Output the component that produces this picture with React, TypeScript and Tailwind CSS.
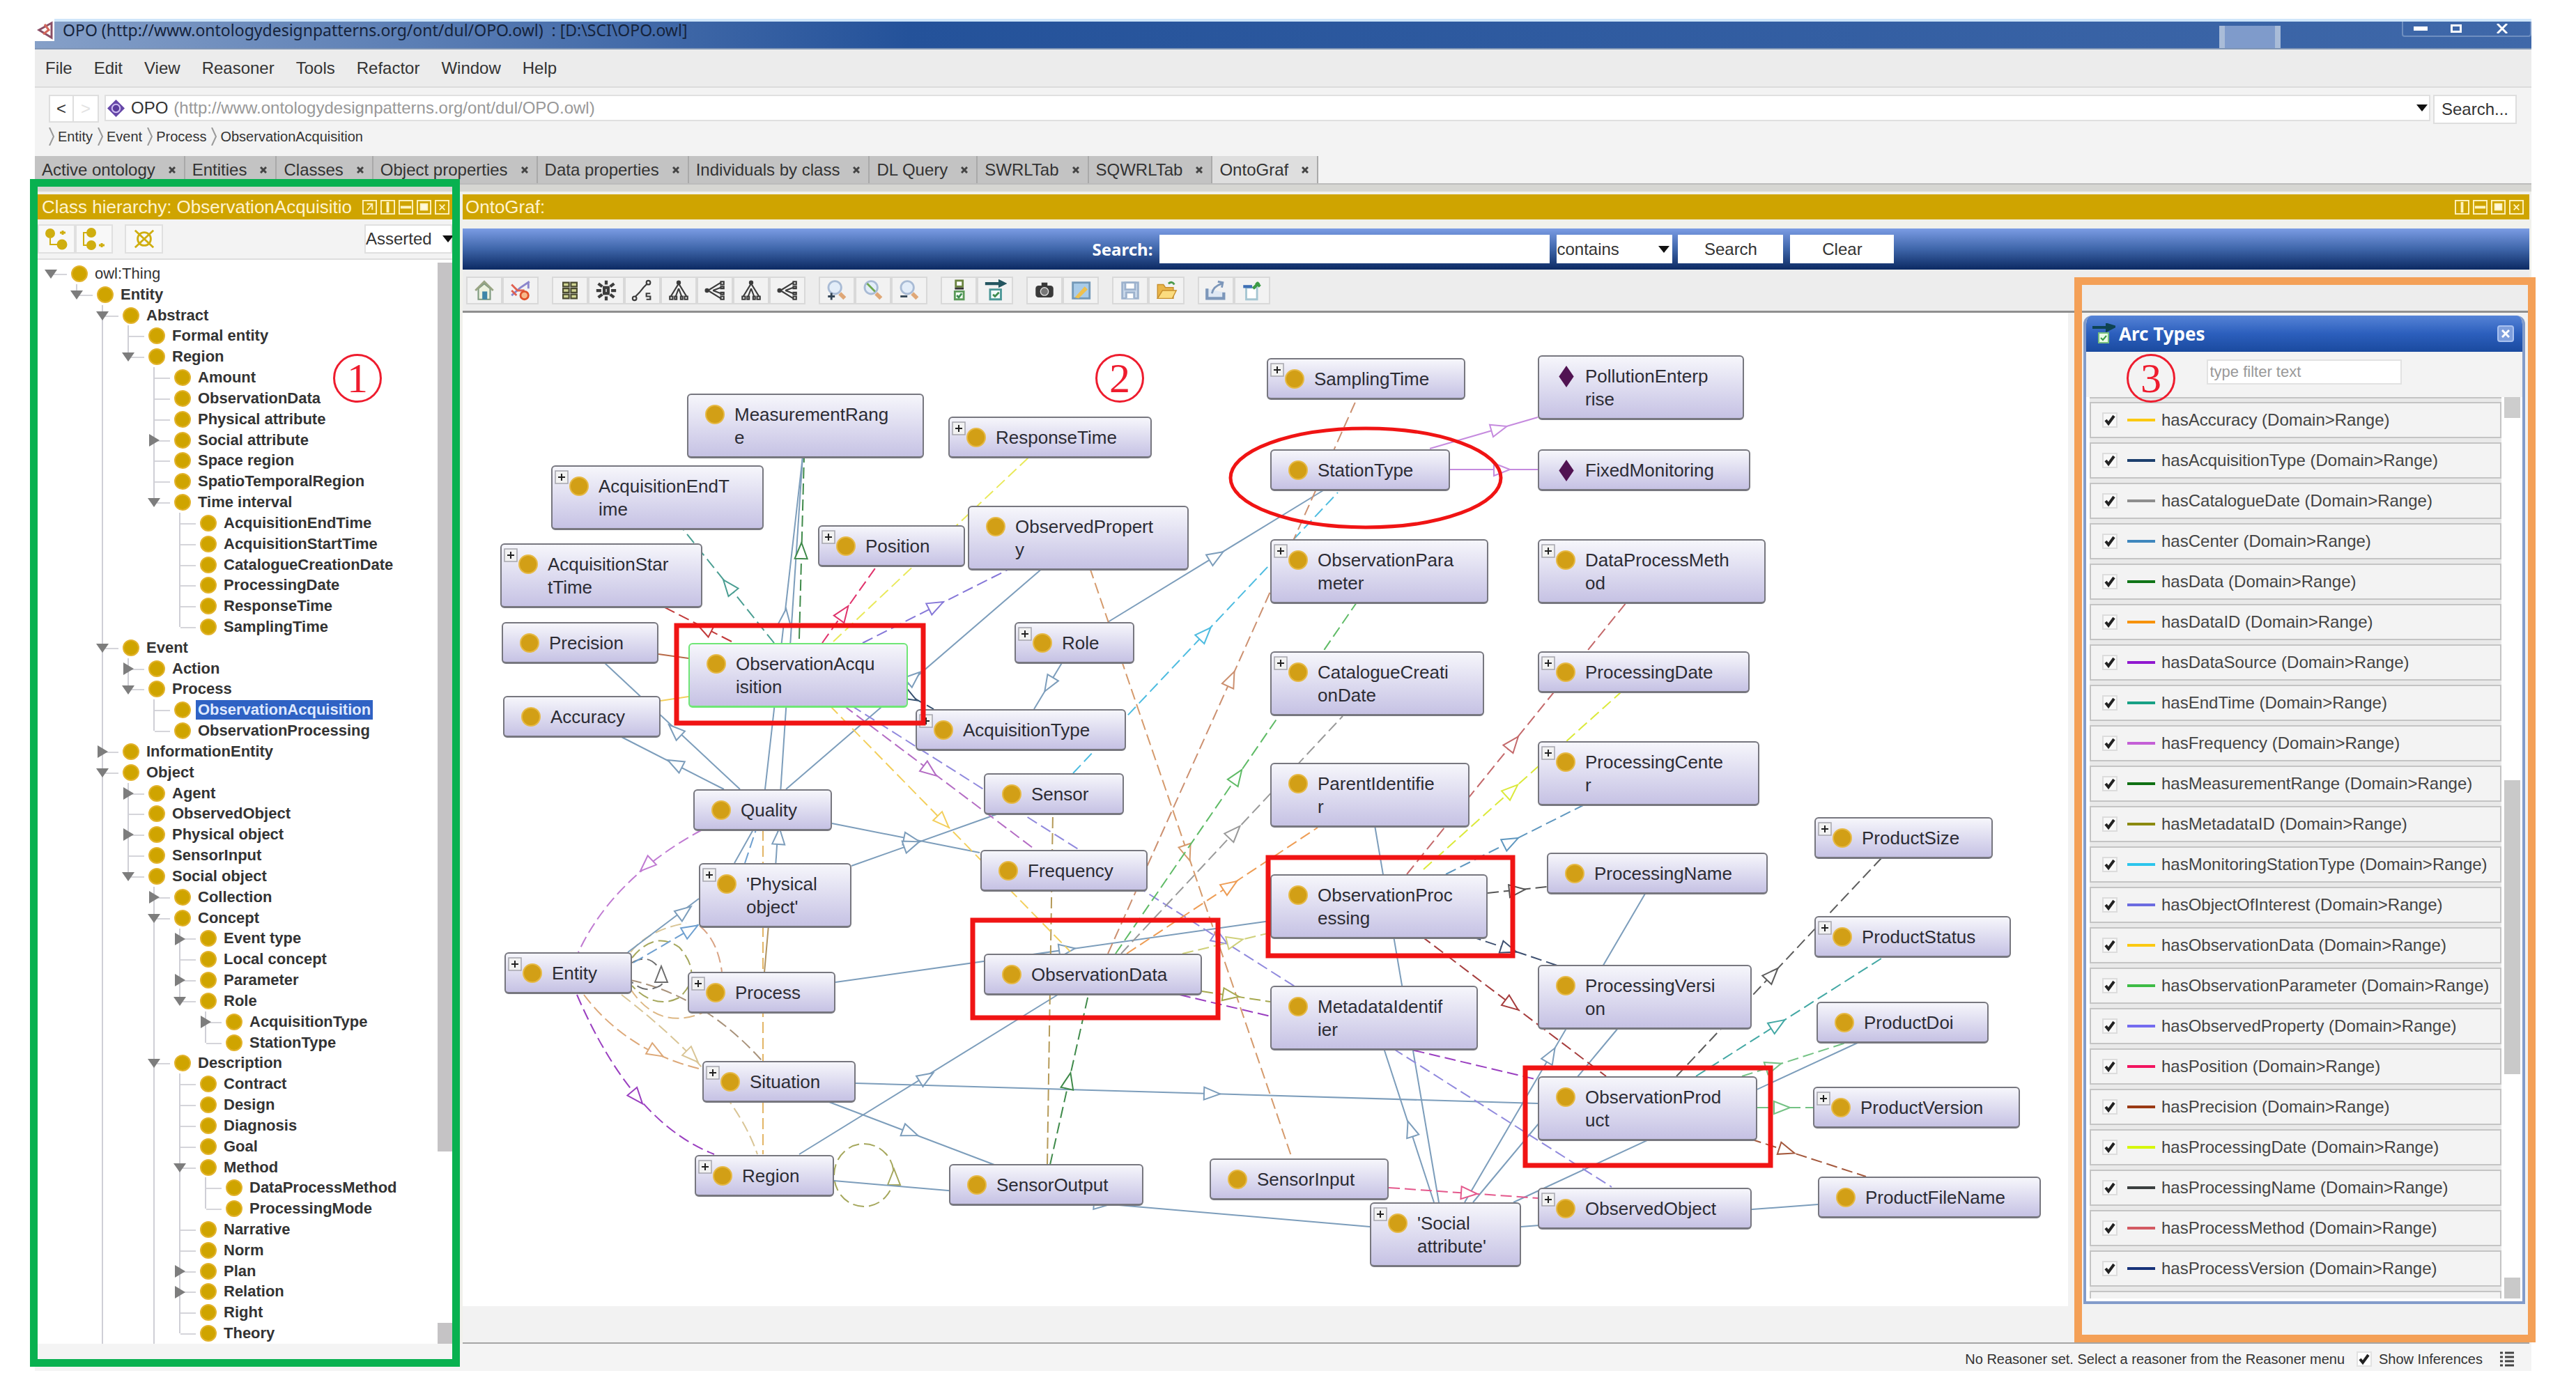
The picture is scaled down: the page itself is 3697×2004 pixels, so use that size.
import React, { useState } from 'react';

type TreeRow = { level: number; name: string; state?: 'open' | 'closed' };

const TREE: TreeRow[] = [
  { level: 0, name: 'owl:Thing', state: 'open' },
  { level: 1, name: 'Entity', state: 'open' },
  { level: 2, name: 'Abstract', state: 'open' },
  { level: 3, name: 'Formal entity' },
  { level: 3, name: 'Region', state: 'open' },
  { level: 4, name: 'Amount' },
  { level: 4, name: 'ObservationData' },
  { level: 4, name: 'Physical attribute' },
  { level: 4, name: 'Social attribute', state: 'closed' },
  { level: 4, name: 'Space region' },
  { level: 4, name: 'SpatioTemporalRegion' },
  { level: 4, name: 'Time interval', state: 'open' },
  { level: 5, name: 'AcquisitionEndTime' },
  { level: 5, name: 'AcquisitionStartTime' },
  { level: 5, name: 'CatalogueCreationDate' },
  { level: 5, name: 'ProcessingDate' },
  { level: 5, name: 'ResponseTime' },
  { level: 5, name: 'SamplingTime' },
  { level: 2, name: 'Event', state: 'open' },
  { level: 3, name: 'Action', state: 'closed' },
  { level: 3, name: 'Process', state: 'open' },
  { level: 4, name: 'ObservationAcquisition' },
  { level: 4, name: 'ObservationProcessing' },
  { level: 2, name: 'InformationEntity', state: 'closed' },
  { level: 2, name: 'Object', state: 'open' },
  { level: 3, name: 'Agent', state: 'closed' },
  { level: 3, name: 'ObservedObject' },
  { level: 3, name: 'Physical object', state: 'closed' },
  { level: 3, name: 'SensorInput' },
  { level: 3, name: 'Social object', state: 'open' },
  { level: 4, name: 'Collection', state: 'closed' },
  { level: 4, name: 'Concept', state: 'open' },
  { level: 5, name: 'Event type', state: 'closed' },
  { level: 5, name: 'Local concept' },
  { level: 5, name: 'Parameter', state: 'closed' },
  { level: 5, name: 'Role', state: 'open' },
  { level: 6, name: 'AcquisitionType', state: 'closed' },
  { level: 6, name: 'StationType' },
  { level: 4, name: 'Description', state: 'open' },
  { level: 5, name: 'Contract' },
  { level: 5, name: 'Design' },
  { level: 5, name: 'Diagnosis' },
  { level: 5, name: 'Goal' },
  { level: 5, name: 'Method', state: 'open' },
  { level: 6, name: 'DataProcessMethod' },
  { level: 6, name: 'ProcessingMode' },
  { level: 5, name: 'Narrative' },
  { level: 5, name: 'Norm' },
  { level: 5, name: 'Plan', state: 'closed' },
  { level: 5, name: 'Relation', state: 'closed' },
  { level: 5, name: 'Right' },
  { level: 5, name: 'Theory' },
];

// levels of the rows that follow below the visible part of the tree
const BELOW = [4, 2];
const LEVELS = [...TREE.map(r => r.level), ...BELOW];

const hasNext = (index: number, level: number) => {
  for (let j = index + 1; j < LEVELS.length; j++) {
    if (LEVELS[j] < level) return false;
    if (LEVELS[j] === level) return true;
  }
  return false;
};

type GraphNode = {
  x: number; y: number; w: number; lines: string[];
  plus?: boolean; individual?: boolean; selected?: boolean;
};

const NODES: GraphNode[] = [
  { x: 986, y: 565, w: 340, lines: ['MeasurementRang', 'e'] },
  { x: 1361, y: 598, w: 292, lines: ['ResponseTime'], plus: true },
  { x: 791, y: 668, w: 305, lines: ['AcquisitionEndT', 'ime'], plus: true },
  { x: 718, y: 780, w: 290, lines: ['AcquisitionStar', 'tTime'], plus: true },
  { x: 1174, y: 754, w: 211, lines: ['Position'], plus: true },
  { x: 1389, y: 726, w: 317, lines: ['ObservedPropert', 'y'] },
  { x: 1818, y: 514, w: 285, lines: ['SamplingTime'], plus: true },
  { x: 2207, y: 510, w: 296, lines: ['PollutionEnterp', 'rise'], individual: true },
  { x: 1823, y: 645, w: 258, lines: ['StationType'] },
  { x: 2207, y: 645, w: 305, lines: ['FixedMonitoring'], individual: true },
  { x: 1823, y: 774, w: 313, lines: ['ObservationPara', 'meter'], plus: true },
  { x: 2207, y: 774, w: 327, lines: ['DataProcessMeth', 'od'], plus: true },
  { x: 720, y: 893, w: 225, lines: ['Precision'] },
  { x: 722, y: 999, w: 226, lines: ['Accuracy'] },
  { x: 988, y: 923, w: 315, lines: ['ObservationAcqu', 'isition'], selected: true },
  { x: 1456, y: 893, w: 172, lines: ['Role'], plus: true },
  { x: 1314, y: 1018, w: 302, lines: ['AcquisitionType'], plus: true },
  { x: 1412, y: 1110, w: 201, lines: ['Sensor'] },
  { x: 995, y: 1133, w: 199, lines: ['Quality'] },
  { x: 1407, y: 1220, w: 240, lines: ['Frequency'] },
  { x: 1003, y: 1239, w: 219, lines: ["'Physical", "object'"], plus: true },
  { x: 724, y: 1367, w: 183, lines: ['Entity'], plus: true },
  { x: 987, y: 1395, w: 212, lines: ['Process'], plus: true },
  { x: 1412, y: 1369, w: 313, lines: ['ObservationData'] },
  { x: 1008, y: 1523, w: 220, lines: ['Situation'], plus: true },
  { x: 997, y: 1658, w: 200, lines: ['Region'], plus: true },
  { x: 1362, y: 1671, w: 279, lines: ['SensorOutput'] },
  { x: 1736, y: 1663, w: 257, lines: ['SensorInput'] },
  { x: 1823, y: 935, w: 307, lines: ['CatalogueCreati', 'onDate'], plus: true },
  { x: 2207, y: 935, w: 304, lines: ['ProcessingDate'], plus: true },
  { x: 1823, y: 1095, w: 286, lines: ['ParentIdentifie', 'r'] },
  { x: 2207, y: 1064, w: 318, lines: ['ProcessingCente', 'r'], plus: true },
  { x: 1823, y: 1255, w: 312, lines: ['ObservationProc', 'essing'] },
  { x: 2220, y: 1224, w: 317, lines: ['ProcessingName'] },
  { x: 2604, y: 1173, w: 256, lines: ['ProductSize'], plus: true },
  { x: 2604, y: 1315, w: 282, lines: ['ProductStatus'], plus: true },
  { x: 2607, y: 1438, w: 247, lines: ['ProductDoi'] },
  { x: 2602, y: 1560, w: 297, lines: ['ProductVersion'], plus: true },
  { x: 2609, y: 1689, w: 320, lines: ['ProductFileName'] },
  { x: 2207, y: 1385, w: 307, lines: ['ProcessingVersi', 'on'] },
  { x: 2207, y: 1545, w: 315, lines: ['ObservationProd', 'uct'] },
  { x: 1823, y: 1415, w: 298, lines: ['MetadataIdentif', 'ier'] },
  { x: 1966, y: 1726, w: 217, lines: ["'Social", "attribute'"], plus: true },
  { x: 2207, y: 1705, w: 307, lines: ['ObservedObject'], plus: true },
];

type Edge = { p: [number, number, number, number]; at?: [number, number]; c: string; dash?: boolean };

const SUB = '#7c9dbb';

const EDGES: Edge[] = [
  // has subclass
  { p: [1098, 1133, 1152, 655], at: [1127, 885], c: SUB },
  { p: [1112, 1260, 1152, 655], at: [1118, 1200], c: SUB },
  { p: [1128, 1133, 1497, 815], at: [1312, 972], c: SUB },
  { p: [1062, 1133, 867, 951], at: [968, 1048], c: SUB },
  { p: [1039, 1133, 892, 1058], at: [968, 1096], c: SUB },
  { p: [1194, 1182, 1406, 1224], at: [1309, 1206], c: SUB },
  { p: [1222, 1243, 1433, 1168], at: [1309, 1212], c: SUB },
  { p: [901, 1367, 1003, 1290], at: [983, 1308], c: SUB },
  { p: [1054, 1239, 1081, 1191], c: SUB },
  { p: [1199, 1410, 1823, 1322], at: [1532, 1363], c: SUB },
  { p: [1147, 1657, 1518, 1428], at: [1330, 1546], c: SUB },
  { p: [1190, 1582, 1427, 1672], at: [1307, 1626], c: SUB },
  { p: [1228, 1555, 2207, 1584], at: [1740, 1570], c: SUB },
  { p: [1197, 1695, 1966, 1761], at: [1582, 1728], c: SUB },
  { p: [1525, 950, 1484, 1018], at: [1505, 983], c: SUB },
  { p: [1590, 893, 1899, 704], at: [1746, 798], c: SUB },
  { p: [2065, 1726, 1973, 1185], c: SUB },
  { p: [2058, 1726, 1986, 1505], at: [2024, 1620], c: SUB },
  { p: [2102, 1726, 2361, 1283], at: [2226, 1514], c: SUB },
  { p: [2114, 1726, 2323, 1475], c: SUB },
  { p: [2172, 1726, 2666, 1497], c: SUB },
  { p: [2183, 1761, 2609, 1729], c: SUB },
  // object properties
  { p: [909, 1382, 1003, 1327], at: [992, 1334], c: '#6fa0d0', dash: true },
  { p: [1069, 1239, 1085, 1191], c: '#6fa0d0', dash: true },
  { p: [1147, 917, 1154, 656], at: [1150, 790], c: '#3f8a4a', dash: true },
  { p: [1095, 1191, 1095, 1657], c: '#e3b565', dash: true },
  { p: [1103, 1328, 1097, 1396], c: '#b0925f' },
  { p: [1507, 1672, 1562, 1428], at: [1534, 1551], c: '#3f8a4a', dash: true },
  { p: [1503, 1672, 1511, 1168], c: '#b59a58', dash: true },
  { p: [1191, 1013, 1536, 1366], at: [1354, 1180], c: '#f3cf5c', dash: true },
  { p: [1211, 1013, 1486, 1220], at: [1335, 1107], c: '#b46cc4', dash: true },
  { p: [1222, 1013, 2313, 1704], at: [1752, 1349], c: '#9089dd', dash: true },
  { p: [1050, 921, 946, 868], at: [1010, 901], c: '#c23a3a', dash: true },
  { p: [1111, 923, 979, 758], at: [1045, 841], c: '#4a9e92', dash: true },
  { p: [1180, 923, 1258, 813], at: [1211, 879], c: '#e0336c', dash: true },
  { p: [1196, 921, 1476, 657], c: '#e9e95a', dash: true },
  { p: [1238, 923, 1452, 815], at: [1344, 869], c: '#8577d8', dash: true },
  { p: [988, 945, 945, 939], c: '#b86a48' },
  { p: [988, 1000, 948, 1006], c: '#f3cf5c' },
  { p: [1290, 990, 1340, 1018], at: [1306, 1000], c: '#36506f', dash: true },
  { p: [1540, 1110, 1920, 707], at: [1730, 909], c: '#4ebce0', dash: true },
  { p: [1564, 815, 1854, 1662], at: [1704, 1225], c: '#d59a6c', dash: true },
  { p: [1590, 1369, 1947, 573], at: [1767, 974], c: '#cc9070', dash: true },
  { p: [1601, 1369, 1947, 865], at: [1776, 1114], c: '#5fbb66', dash: true },
  { p: [1609, 1369, 1927, 1028], at: [1772, 1194], c: '#9a9a9a', dash: true },
  { p: [1617, 1369, 1891, 1188], at: [1766, 1271], c: '#ee9d55', dash: true },
  { p: [1697, 1369, 1823, 1339], at: [1773, 1351], c: '#cfd07a', dash: true },
  { p: [1725, 1423, 1823, 1438], at: [1767, 1429], c: '#a6a84e', dash: true },
  { p: [1693, 1428, 2207, 1550], c: '#9a3fc0', dash: true },
  { p: [1993, 1705, 2222, 1721], at: [2109, 1713], c: '#e4588c', dash: true },
  { p: [2019, 1255, 2334, 865], at: [2172, 1066], c: '#c4696b', dash: true },
  { p: [2043, 1248, 2326, 994], at: [2170, 1134], c: '#dbe93a', dash: true },
  { p: [2075, 1255, 2274, 1155], at: [2169, 1208], c: '#5f97bf', dash: true },
  { p: [2135, 1282, 2220, 1273], at: [2178, 1278], c: '#555555', dash: true },
  { p: [2110, 1344, 2235, 1386], at: [2166, 1363], c: '#3d4f70', dash: true },
  { p: [2040, 1344, 2305, 1545], at: [2170, 1443], c: '#a63d3d', dash: true },
  { p: [2406, 1545, 2700, 1232], at: [2544, 1398], c: '#5c5c5c', dash: true },
  { p: [2434, 1545, 2703, 1374], at: [2552, 1470], c: '#43a8a4', dash: true },
  { p: [2500, 1545, 2649, 1497], at: [2546, 1530], c: '#74c284', dash: true },
  { p: [2522, 1590, 2602, 1590], at: [2558, 1590], c: '#74c284', dash: true },
  { p: [2512, 1635, 2678, 1689], at: [2565, 1652], c: '#a4583c', dash: true },
  // has individual
  { p: [2052, 644, 2207, 599], at: [2152, 615], c: '#c58ade' },
  { p: [2081, 674, 2207, 674], at: [2156, 674], c: '#c58ade' },
];

type Curve = { d: string; c: string; at?: [number, number, number] };

const CURVES: Curve[] = [
  { d: 'M1008 1191Q880 1260 830 1367', c: '#c07ad2', at: [927, 1243, 137] },
  { d: 'M828 1428Q907 1611 1025 1657', c: '#9a3fc0', at: [915, 1576, 50] },
  { d: 'M838 1428Q900 1510 1007 1535', c: '#dda878', at: [942, 1511, 30] },
  { d: 'M892 1428Q1050 1550 1087 1657', c: '#d9c596', at: [994, 1517, 45] },
  { d: 'M905 1407Q1010 1430 1093 1522', c: '#a8927a' },
  { d: 'M907 1382Q930 1368 946 1390T940 1418Q925 1425 907 1410', c: '#6c6c6c', at: [949, 1398, -90] },
  { d: 'M907 1375Q940 1335 975 1360Q1010 1400 975 1432Q940 1450 907 1415', c: '#a5a75c' },
  { d: 'M1004 1329Q1030 1350 1036 1395', c: '#d9a384' },
  { d: 'M905 1420Q945 1480 1008 1454', c: '#ddb784' },
  { d: 'M905 1367Q930 1335 985 1325', c: '#d9c596' },
  { d: 'M1197 1687A43 45 0 0 1 1283 1687A43 45 0 0 1 1197 1687', c: '#a5a75c', at: [1283, 1689, -90] },
];

const ARCS: [string, string][] = [
  ['hasAccuracy', '#fbc911'], ['hasAcquisitionType', '#1c3f6e'], ['hasCatalogueDate', '#8d8d8d'],
  ['hasCenter', '#3f87bd'], ['hasData', '#107518'], ['hasDataID', '#f79208'],
  ['hasDataSource', '#9018cf'], ['hasEndTime', '#17a085'], ['hasFrequency', '#c45fd6'],
  ['hasMeasurementRange', '#0f7013'], ['hasMetadataID', '#8b8a10'], ['hasMonitoringStationType', '#2cc5ec'],
  ['hasObjectOfInterest', '#6b6be0'], ['hasObservationData', '#fbc911'], ['hasObservationParameter', '#3dbb45'],
  ['hasObservedProperty', '#746bef'], ['hasPosition', '#f2145f'], ['hasPrecision', '#9a3a14'],
  ['hasProcessingDate', '#d6f70b'], ['hasProcessingName', '#3b3f3f'], ['hasProcessMethod', '#d35a62'],
  ['hasProcessVersion', '#173279'],
];

const TABS = ['Active ontology', 'Entities', 'Classes', 'Object properties', 'Data properties', 'Individuals by class', 'DL Query', 'SWRLTab', 'SQWRLTab', 'OntoGraf'];

// graph coordinate shown in the top left corner of the canvas
const ORIGIN = { x: 664, y: 449 };

function Caret({ className = '' }: { className?: string }) {
  return <svg viewBox="0 0 16 10" className={`h-[10px] w-4 ${className}`}><path d="M0 0H16L8 10Z" fill="#111" /></svg>;
}

function Marker({ n, className }: { n: number; className: string }) {
  return (
    <div className={`absolute z-30 flex size-[70px] items-center justify-center rounded-full border-[3px] border-[#ee1c2e] font-['Liberation_Serif',serif] text-[60px] leading-none text-[#ee1c2e] ${className}`}>
      {n}
    </div>
  );
}

function ViewButtons({ names }: { names: string[] }) {
  const shapes: Record<string, React.ReactNode> = {
    Float: <path d="M7 6h8v9M15 6L7 16" />,
    'Split vertically': <path d="M11 3V19" strokeWidth="4" />,
    'Split horizontally': <path d="M3 11H19" strokeWidth="4" />,
    Maximise: <rect x="6" y="6" width="10" height="9" fill="#fff8dc" />,
    Close: <path d="M7 7L15 15M15 7L7 15" />,
  };
  return (
    <div className="flex gap-[5px]">
      {names.map(name => (
        <button key={name} aria-label={name} className="size-[21px]">
          <svg viewBox="0 0 22 22" className="size-full" fill="none" stroke="#fff3bf" strokeWidth="2">
            <rect x="1" y="1" width="20" height="20" />
            {shapes[name]}
          </svg>
        </button>
      ))}
    </div>
  );
}

function TreeItem({ row, index }: { row: TreeRow; index: number }) {
  const selected = row.name === 'ObservationAcquisition';
  const next = hasNext(index, row.level);
  return (
    <li className="flex min-h-0 flex-1 items-center">
      {Array.from({ length: row.level }, (_, level) => (
        <span key={level} className="flex h-full w-[37px] shrink-0">
          {level > 0 && hasNext(index, level) && <span className="w-[19px] border-r-2 border-[#cfcfd6]" />}
        </span>
      ))}
      <span className="relative h-full w-[37px] shrink-0">
        {row.level > 0 && <span className={`absolute left-0 top-0 w-[19px] border-r-2 border-[#cfcfd6] ${next ? 'h-full' : 'h-1/2'}`} />}
        <span className="absolute left-[19px] top-1/2 w-[22px] border-t-2 border-[#d5d5da]" />
        {row.state && (
          <svg viewBox="0 0 18 18" className="absolute left-[9px] top-[6px] size-[18px]">
            <path d={row.state === 'open' ? 'M0 3H18L9 16Z' : 'M2 0L17 9L2 18Z'} fill="#7d7d7d" />
          </svg>
        )}
      </span>
      <span className="ml-[10px] size-6 shrink-0 rounded-full border-2 border-[#e2b32c] bg-[#cfa400]" />
      <span className={`ml-[7px] whitespace-nowrap px-[3px] text-[22px] leading-7 ${selected ? 'bg-[#2f62c4] font-bold text-[#dfe9ff]' : row.level === 0 ? 'text-[#333]' : 'font-bold text-[#333]'}`}>
        {row.name}
      </span>
    </li>
  );
}

function ClassHierarchy() {
  return (
    <aside className="relative flex w-[612px] shrink-0 flex-col pl-1 pr-[13px]">
      <header className="flex h-9 shrink-0 items-center justify-between bg-[#cfa400] pl-[6px] pr-1">
        <h2 className="whitespace-nowrap text-[26px] leading-9 text-[#fff3cf]">Class hierarchy: ObservationAcquisitio</h2>
        <ViewButtons names={['Float', 'Split vertically', 'Split horizontally', 'Maximise', 'Close']} />
      </header>
      <div className="flex h-[58px] shrink-0 items-center border-b-2 border-[#dedede] bg-[#f3f3f3]">
        <button aria-label="Add subclass" className="flex h-[42px] w-[54px] items-center justify-center border-2 border-[#e0e0e0] bg-[#f8f8f8]">
          <svg viewBox="0 0 36 34" className="h-[34px] w-9" fill="#cfae10">
            <circle cx="9" cy="9" r="7" /><circle cx="26" cy="25" r="7.500" />
            <path d="M9 16V25H19" fill="none" stroke="#cfae10" strokeWidth="2" /><path d="M23 8h8M27 5v6" stroke="#cfae10" strokeWidth="3" />
          </svg>
        </button>
        <button aria-label="Add sibling class" className="flex h-[42px] w-[54px] items-center justify-center border-2 border-[#e0e0e0] bg-[#f8f8f8]">
          <svg viewBox="0 0 36 34" className="h-[34px] w-9" fill="#cfae10">
            <circle cx="14" cy="8" r="7" /><circle cx="14" cy="26" r="7" />
            <path d="M10 8H3V26H10" fill="none" stroke="#cfae10" strokeWidth="2" /><path d="M25 26h8M29 23v6" stroke="#cfae10" strokeWidth="3" />
          </svg>
        </button>
        <button aria-label="Delete class" className="ml-[17px] flex h-[42px] w-[55px] items-center justify-center border-2 border-[#e0e0e0] bg-[#f8f8f8]">
          <svg viewBox="0 0 34 34" className="size-8" fill="none" stroke="#cfae10" strokeWidth="3">
            <circle cx="17" cy="17" r="10" /><path d="M3 4L31 30M31 4L3 30" />
          </svg>
        </button>
        <div className="relative ml-auto h-[42px] w-[126px] border-2 border-[#e0e0e0] bg-white">
          <select aria-label="Hierarchy view" className="h-full w-full appearance-none text-2xl text-[#333]">
            <option>Asserted</option>
          </select>
          <Caret className="pointer-events-none absolute -right-1 top-[14px]" />
        </div>
      </div>
      <div className="flex min-h-0 flex-1 bg-white">
        <ul className="flex min-w-0 flex-1 flex-col pl-px pt-[5px]">
          {TREE.map((row, i) => <TreeItem key={i} row={row} index={i} />)}
        </ul>
        <div className="flex w-[21px] flex-col justify-between">
          <div className="mt-1 h-[82%] bg-[#c5c3c5]" />
          <div className="h-[30px] bg-[#c5c3c5]" />
        </div>
      </div>
      <Marker n={1} className="left-[428px] top-[229px]" />
      <div className="pointer-events-none absolute -bottom-[33px] -left-[7px] -top-[22px] right-[2px] z-20 border-[11px] border-[#09b150]" />
    </aside>
  );
}

const dark = { fill: 'none', stroke: '#3c3c3c', strokeWidth: 2 };
const treeDown = (
  <g fill="none" stroke="#3c3c3c" strokeWidth="1.500">
    <path d="M12 5L4 18M12 5L20 18M12 10L9 18M12 10L15 18" />
    <circle cx="12" cy="4" r="1.500" fill="#3c3c3c" />
    <path d="M3 18h3v3H3zM8 18h2v3H8zM14 18h2v3h-2zM18 18h3v3h-3z" />
  </g>
);
const treeRight = <g transform="rotate(-90 12 12)">{treeDown}</g>;
const lens = (sign: React.ReactNode) => (
  <g fill="none" strokeWidth="2">
    <path d="M15 15L20 20" stroke="#dfa777" strokeWidth="4" />
    <circle cx="10" cy="9" r="6.500" fill="#e3edf9" stroke="#a9bbd5" />
    {sign}
  </g>
);

const TOOLS: { name: string; icon: React.ReactNode }[][] = [
  [
    { name: 'Home', icon: <g strokeWidth="1.500"><path d="M6 10V21H18V10L12 5Z" fill="#edf2df" stroke="#7f9a80" /><path d="M3 12L12 3L21 12" fill="none" stroke="#9aa684" strokeWidth="2" /><rect x="10" y="13" width="5" height="8" fill="#3e86a8" /></g> },
    { name: 'Clear graph', icon: <g fill="none" strokeWidth="2"><path d="M3 17L12 9L21 3M20 3v7" stroke="#8b86cc" /><path d="M3 6L9 12L16 12M3 12L8 17" stroke="#e0604f" /><circle cx="16" cy="17" r="4" fill="#f7b98b" stroke="#e0522a" /></g> },
  ],
  [
    { name: 'Grid layout', icon: <path d="M5 4h6v4H5zM13 4h6v4h-6zM5 10h6v4H5zM13 10h6v4h-6zM5 16h6v4H5zM13 16h6v4h-6z" fill="#d0d592" stroke="#4a4a30" strokeWidth="1.500" /> },
    { name: 'Radial layout', icon: <g {...dark} strokeWidth="3"><path d="M12 2v4M12 18v4M2 12h5M17 12h5M4 5l4 3M20 5l-4 3M4 19l4-3M20 19l-4-3" /><rect x="10" y="9" width="4" height="6" /></g> },
    { name: 'Spring layout', icon: <g {...dark} strokeWidth="1.500"><path d="M5 18L9 14L13 9L17 5" /><circle cx="18" cy="4" r="2" /><circle cx="4" cy="20" r="2" /><path d="M20 15h-4v3h4v3h-4" /></g> },
    { name: 'Tree layout, vertical', icon: treeDown },
    { name: 'Tree layout, horizontal', icon: treeRight },
    { name: 'Directed layout, vertical', icon: treeDown },
    { name: 'Directed layout, horizontal', icon: treeRight },
  ],
  [
    { name: 'Zoom in', icon: lens(<path d="M3 18h7M6.500 14.500v7" stroke="#345" />) },
    { name: 'No zoom', icon: lens(<path d="M6 5L14 13" stroke="#6fa84f" />) },
    { name: 'Zoom out', icon: lens(<path d="M3 18h7" stroke="#345" />) },
  ],
  [
    { name: 'Node types', icon: <g fill="none" strokeWidth="2"><rect x="9" y="2" width="7" height="6" stroke="#6b8440" fill="#fff" /><path d="M8 10h9" stroke="#333" /><path d="M8 13h9v8H8z" stroke="#5c9a5a" fill="#f4fff4" /><path d="M10 17l2 2 3-4" stroke="#3e8c50" /></g> },
    { name: 'Arc types', icon: <g fill="none" strokeWidth="2"><path d="M2 5H18M17 3l4 2-4 2z" stroke="#245560" fill="#245560" strokeWidth="3" /><path d="M7 11h11v10H7z" stroke="#4b9797" fill="#f2fbfb" /><path d="M10 16l2 2 4-4" stroke="#3e8c50" /></g> },
  ],
  [
    { name: 'Screenshot', icon: <g><rect x="3" y="7" width="18" height="12" rx="3" fill="#3a3a3a" /><rect x="9" y="4" width="6" height="4" fill="#3a3a3a" /><circle cx="12" cy="13" r="4" fill="#777" stroke="#ddd" /></g> },
    { name: 'Export image', icon: <g><rect x="4" y="4" width="17" height="16" fill="#a9cbe8" stroke="#7398b8" strokeWidth="2" /><path d="M6 19L16 8L19 11L10 20Z" fill="#eec04e" /></g> },
  ],
  [
    { name: 'Save graph', icon: <g fill="none" stroke="#9db2cd" strokeWidth="2"><path d="M4 4h16v16H4z" fill="#c9d8ea" /><path d="M7 4h10v7H7zM8 20v-6h8v6" fill="#fff" /></g> },
    { name: 'Open graph', icon: <g><path d="M3 20V6h6l2 3h8v11z" fill="#e9b54a" stroke="#c78f2c" /><path d="M3 20L8 12h14l-4 8z" fill="#fbdc7f" stroke="#c78f2c" /><path d="M14 5q4-3 6 1" fill="none" stroke="#4c9a4c" strokeWidth="2" /></g> },
  ],
  [
    { name: 'Export graph', icon: <g fill="none" stroke="#7d97ba" strokeWidth="2"><path d="M3 10V20H20V14" fill="#dfe8f4" strokeWidth="3" /><path d="M8 15Q9 8 18 5M14 3l5 1-1 5" /></g> },
    { name: 'Pin tooltips', icon: <g fill="none" strokeWidth="2"><path d="M6 9h11v12H6z" stroke="#a5c6d2" fill="#fff" /><path d="M3 8h9" stroke="#3d6fb5" strokeWidth="3" /><path d="M13 10L19 4M16 4l4 4" stroke="#3c9a45" strokeWidth="3" /></g> },
  ],
];

function GraphEdges() {
  return (
    <svg width="2304" height="1425" viewBox="664 449 2304 1425" className="absolute left-0 top-0 max-w-none" fill="none" strokeWidth="2">
      {CURVES.map((c, i) => (
        <g key={i} stroke={c.c}>
          <path d={c.d} strokeDasharray="16 7" />
          {c.at && <path d="M-12 -9L11 0L-12 9Z" fill="#fff" transform={`translate(${c.at[0]} ${c.at[1]}) rotate(${c.at[2]})`} />}
        </g>
      ))}
      {EDGES.map(({ p, at, c, dash }, i) => {
        const angle = (Math.atan2(p[3] - p[1], p[2] - p[0]) * 180) / Math.PI;
        return (
          <g key={i} stroke={c}>
            <path d={`M${p[0]} ${p[1]}L${p[2]} ${p[3]}`} strokeDasharray={dash ? '16 7' : undefined} />
            {at && <path d="M-12 -9L11 0L-12 9Z" fill="#fff" transform={`translate(${at[0]} ${at[1]}) rotate(${angle})`} />}
          </g>
        );
      })}
    </svg>
  );
}

function GraphNodeBox({ node }: { node: GraphNode }) {
  return (
    <div
      className={`absolute flex items-start rounded-md border-2 border-b-[3px] bg-linear-to-b from-[#f6f6fb] to-[#c6c2e4] pb-[10px] pl-6 pt-3 ${node.selected ? 'border-[#6fe676]' : 'border-[#77777f]'}`}
      style={{ left: node.x - ORIGIN.x, top: node.y - ORIGIN.y, width: node.w }}
    >
      {node.plus && (
        <svg viewBox="0 0 20 20" className="absolute left-[3px] top-[5px] size-5">
          <rect x="1" y="1" width="18" height="18" fill="#f2f2f2" stroke="#a5a5ad" strokeWidth="1.500" />
          <path d="M5 10H15M10 5V15" stroke="#222" strokeWidth="2" />
        </svg>
      )}
      {node.individual ? (
        <svg viewBox="0 0 24 34" className="mx-[3px] h-[33px] w-6 shrink-0"><path d="M12 1L23 17L12 33L1 17Z" fill="#511352" /></svg>
      ) : (
        <span className="mt-[2px] size-7 shrink-0 rounded-full border-2 border-[#e6b945] bg-[#d29f16]" />
      )}
      <p className={`whitespace-nowrap text-[26px] leading-[33px] text-[#2c2c34] ${node.individual ? 'ml-3' : 'ml-[14px]'}`}>
        {node.lines.map((line, i) => <span key={i} className="block">{line}</span>)}
      </p>
    </div>
  );
}

function ArcTypes() {
  return (
    <div className="relative mb-[55px] ml-[22px] mr-[6px] mt-1 flex min-h-0 flex-1 flex-col overflow-hidden rounded-t-xl border-x-4 border-b-4 border-[#839cca] bg-white">
      <header className="-mx-1 flex h-[52px] shrink-0 items-center bg-linear-to-b from-[#5583d6] via-[#2c5fbd] to-[#1a4a9f] pl-3 pr-4">
        <svg viewBox="0 0 34 30" className="h-[30px] w-[34px]">
          <path d="M1 6H24M22 2L32 5L22 10Z" stroke="#0e4352" fill="#0e4352" strokeWidth="4" />
          <rect x="10" y="14" width="14" height="14" fill="#eafbe6" stroke="#78c07e" strokeWidth="2" /><path d="M13 21l3 3 5-6" stroke="#3a9a48" strokeWidth="2" fill="none" />
        </svg>
        <h2 className="ml-[5px] flex-1 font-['Noto_Sans',sans-serif] text-[26px] font-bold leading-9 text-white">Arc Types</h2>
        <button aria-label="Close arc types" className="flex size-6 items-center justify-center rounded border-2 border-[#a9c1ef] bg-[#7f9fdd]">
          <svg viewBox="0 0 12 12" className="size-3" stroke="#fff" strokeWidth="3"><path d="M1 1L11 11M11 1L1 11" /></svg>
        </button>
      </header>
      <div className="flex h-[65px] shrink-0 justify-center bg-[#f3f3f3] pt-[11px]">
        <input aria-label="Filter arc types" placeholder="type filter text" className="mr-px h-9 w-[280px] border-2 border-[#e2e2e2] bg-white px-[3px] text-[22px] placeholder:text-[#999]" />
      </div>
      <div className="flex min-h-0 flex-1 pb-1 pl-[5px] pr-[3px]">
        <div className="min-h-0 w-[591px] overflow-hidden bg-[#e9e9e9]">
          <ul className="flex flex-col gap-[6px] border-t-2 border-[#c4c4c4] pt-[5px]">
            {ARCS.map(([name, color]) => (
              <li key={name} className="h-[52px] shrink-0 border-2 border-[#c4c4c4] bg-[#f3f3f3]">
                <label className="flex h-full items-center pl-4">
                  <span className="relative size-[22px]">
                    <input type="checkbox" defaultChecked className="peer block size-full appearance-none border-2 border-[#dcdcdc] bg-[#f8f8f8]" />
                    <svg viewBox="0 0 22 22" className="pointer-events-none absolute left-0 top-0 hidden size-full peer-checked:block" fill="none" stroke="#222" strokeWidth="4"><path d="M5 11L9 16L17 5" /></svg>
                  </span>
                  <svg viewBox="0 0 40 4" className="ml-[14px] h-1 w-10"><path d="M0 2H40" stroke={color} strokeWidth="4" /></svg>
                  <span className="ml-[9px] whitespace-nowrap text-2xl text-[#444]">{name} (Domain&gt;Range)</span>
                </label>
              </li>
            ))}
            <li className="h-[52px] shrink-0 border-2 border-[#c4c4c4] bg-[#f3f3f3]" />
          </ul>
        </div>
        <div className="ml-auto flex w-[23px] flex-col">
          <div className="h-[30px] shrink-0 bg-[#cdcdcd]" />
          <div className="grow-[16]" />
          <div className="h-[422px] shrink-0 bg-[#c9c9c9]" />
          <div className="grow-[9]" />
          <div className="h-[30px] shrink-0 bg-[#c9c9c9]" />
        </div>
      </div>
    </div>
  );
}

function OntoGraf() {
  return (
    <section className="ml-[2px] mr-[3px] flex min-w-0 flex-1 flex-col border-b-2 border-[#a5a5a5]">
      <header className="flex h-9 shrink-0 items-center justify-between bg-[#cfa400] pl-1 pr-2">
        <h2 className="text-[26px] leading-9 text-[#fff3cf]">OntoGraf:</h2>
        <ViewButtons names={['Split vertically', 'Split horizontally', 'Maximise', 'Close']} />
      </header>
      <form className="mt-[13px] flex h-[59px] shrink-0 items-center justify-center bg-linear-to-b from-[#7b9ce4] via-[#3f66aa] to-[#0c2a63] pr-2 text-2xl text-[#333]" onSubmit={e => e.preventDefault()}>
        <label htmlFor="graph-search" className="mr-[10px] font-['Noto_Sans',sans-serif] font-bold text-white">Search:</label>
        <input id="graph-search" className="h-[41px] w-[560px] bg-white px-2" />
        <div className="relative ml-[10px] h-[41px] w-[166px] bg-white">
          <select aria-label="Match mode" className="h-full w-full appearance-none">
            <option>contains</option>
          </select>
          <Caret className="pointer-events-none absolute right-1 top-4" />
        </div>
        <button className="ml-2 h-[41px] w-[151px] bg-white">Search</button>
        <button type="button" className="ml-[10px] h-[41px] w-[149px] bg-white">Clear</button>
      </form>
      <div className="flex h-[62px] shrink-0 items-center gap-[19px] border-b-[3px] border-[#8f8f8f] bg-[#ededed] pl-[5px]">
        {TOOLS.map((group, i) => (
          <div key={i} className="flex">
            {group.map(tool => (
              <button key={tool.name} aria-label={tool.name} className="flex h-10 w-[52px] items-center justify-center border-2 border-[#d9d9d9] bg-[#f2f2f2]">
                <svg viewBox="0 0 24 24" className="size-[34px]">{tool.icon}</svg>
              </button>
            ))}
          </div>
        ))}
      </div>
      <div className="flex min-h-0 flex-1 bg-[#f2f2f2]">
        <div className="relative mb-[52px] min-w-0 flex-1 overflow-hidden bg-white">
          <GraphEdges />
          {NODES.map(node => <GraphNodeBox key={node.lines.join('')} node={node} />)}
          <svg width="2304" height="1425" viewBox="664 449 2304 1425" className="pointer-events-none absolute left-0 top-0 max-w-none" fill="none" stroke="#f01414" strokeWidth="7">
            <rect x="971" y="898" width="354" height="140" />
            <rect x="1396" y="1321" width="352" height="140" />
            <rect x="1820" y="1231" width="351" height="141" />
            <rect x="2189" y="1533" width="352" height="140" />
            <ellipse cx="1960" cy="686" rx="194" ry="71" strokeWidth="5" />
          </svg>
          <Marker n={2} className="left-[908px] top-[59px]" />
        </div>
        <div className="relative flex w-[662px] shrink-0 flex-col">
          <ArcTypes />
          <Marker n={3} className="left-[84px] top-[59px]" />
          <div className="pointer-events-none absolute -right-[9px] -top-[51px] bottom-0 left-[9px] z-20 border-[11px] border-[#f4a057]" />
        </div>
      </div>
    </section>
  );
}

export default function App() {
  const [tab, setTab] = useState('OntoGraf');

  return (
    <div className="flex h-screen flex-col overflow-hidden bg-white pb-9 pl-[50px] pr-16 pt-[27px] font-['Liberation_Sans',Arial,sans-serif] text-[#333]">
      <header className="flex h-11 shrink-0 items-start border-b-2 border-t-4 border-b-[#7f95b5] border-t-[#cfe6fa] bg-linear-to-r from-[#86a0c8] via-[#24529a] via-35% to-[#3f68a9]">
        <svg viewBox="0 0 28 28" className="-mt-1 h-8 w-7 bg-white" fill="none" strokeWidth="3">
          <path d="M24 4L6 14L24 25Z" stroke="#8c4f66" /><path d="M14 6L20 14L12 20" stroke="#d5675b" />
        </svg>
        <h1 className="ml-3 font-['Noto_Sans',sans-serif] text-[23px] leading-6 text-[#16243c]">OPO (http://www.ontologydesignpatterns.org/ont/dul/OPO.owl)&nbsp; : [D:\SCI\OPO.owl]</h1>
        <span className="ml-auto mr-[174px] mt-[6px] h-8 w-[88px] border-x-8 border-[#a9bcd8] bg-[#7f9bcb]" />
        <div className="flex h-[22px] rounded-b border-2 border-t-0 border-[#6f8fc0] text-white">
          <button aria-label="Minimise" className="flex w-[50px] items-center justify-center"><span className="h-[6px] w-5 bg-white" /></button>
          <button aria-label="Restore" className="flex w-[52px] items-center justify-center"><span className="h-3 w-4 border-[3px] border-white" /></button>
          <button aria-label="Close" className="flex w-20 items-center justify-center"><svg viewBox="0 0 16 14" className="h-[14px] w-4" stroke="#fff" strokeWidth="3"><path d="M1 0L15 14M15 0L1 14" /></svg></button>
        </div>
      </header>
      <nav className="flex h-[55px] shrink-0 items-center gap-[31px] border-b-2 border-[#dcdcdc] bg-[#ececec] pl-[15px] text-2xl">
        {['File', 'Edit', 'View', 'Reasoner', 'Tools', 'Refactor', 'Window', 'Help'].map(item => <button key={item}>{item}</button>)}
      </nav>
      <div className="h-[98px] shrink-0 bg-[#f3f3f3] pl-5 pr-[21px] pt-[10px]">
        <div className="flex h-10 items-start text-2xl">
          <button aria-label="Back" className="h-10 w-9 border-2 border-[#dedede] bg-white leading-8">&lt;</button>
          <button aria-label="Forward" className="h-10 w-9 border-2 border-l-0 border-[#dedede] bg-white leading-8 text-[#e2e2e2]">&gt;</button>
          <button aria-haspopup="listbox" className="ml-2 flex h-[38px] flex-1 items-center border-2 border-[#e0e0e0] bg-white pl-[2px] pr-[2px]">
            <svg viewBox="0 0 24 24" className="size-[25px]"><path d="M12 0L24 12L12 24L0 12Z" fill="#6647a8" /><circle cx="12" cy="12" r="5.500" fill="#5a3c9c" stroke="#cdbcf0" strokeWidth="2" /></svg>
            <span className="ml-[9px]">OPO</span>
            <span className="ml-2 flex-1 text-left text-[#999]">(http://www.ontologydesignpatterns.org/ont/dul/OPO.owl)</span>
            <Caret />
          </button>
          <button className="ml-1 h-[42px] w-[120px] border-2 border-[#dedede] bg-white">Search...</button>
        </div>
        <ol className="mt-[7px] flex items-center text-xl leading-[26px]">
          {['Entity', 'Event', 'Process', 'ObservationAcquisition'].map(crumb => (
            <li key={crumb} className="mr-[7px] flex items-center">
              <svg viewBox="0 0 8 26" className="mr-[5px] h-[26px] w-2" fill="none" stroke="#999" strokeWidth="2"><path d="M1 0L7 13L1 26" /></svg>
              <a href="#">{crumb}</a>
            </li>
          ))}
        </ol>
      </div>
      <div role="tablist" className="flex h-[41px] shrink-0 border-b-2 border-[#bcbcbc] bg-[#f3f3f3] text-2xl leading-9">
        {TABS.map(name => (
          <div key={name} className={`flex items-center border-r-2 border-[#a9a9a9] pl-[10px] pr-3 ${name === tab ? 'bg-[#dedede]' : 'bg-[#c3c3c3]'}`}>
            <button role="tab" aria-selected={name === tab} onClick={() => setTab(name)} className="whitespace-nowrap">{name}</button>
            <button aria-label={`Close ${name}`} className="ml-[19px]">
              <svg viewBox="0 0 10 10" className="size-[10px]" stroke="#444" strokeWidth="3"><path d="M1 1L9 9M9 1L1 9" /></svg>
            </button>
          </div>
        ))}
      </div>
      <main className="flex min-h-0 flex-1 border-t-[10px] border-[#d6d6d2] bg-[#f1f1ec] pt-1">
        <ClassHierarchy />
        <OntoGraf />
      </main>
      <footer className="flex h-[39px] shrink-0 items-center justify-end bg-[#f4f4f4] pr-[25px] pt-1 text-xl">
        <span>No Reasoner set. Select a reasoner from the Reasoner menu</span>
        <label className="ml-[17px] flex items-center">
          <span className="relative size-[22px]">
            <input type="checkbox" defaultChecked className="peer block size-full appearance-none border-2 border-[#e2e2e2] bg-white" />
            <svg viewBox="0 0 22 22" className="pointer-events-none absolute left-0 top-0 hidden size-full peer-checked:block" fill="none" stroke="#222" strokeWidth="4"><path d="M5 11L9 16L17 5" /></svg>
          </span>
          <span className="ml-[10px]">Show Inferences</span>
        </label>
        <svg viewBox="0 0 20 22" className="ml-[25px] h-[22px] w-5" stroke="#444" strokeWidth="3"><path d="M7 2H20M7 8H20M7 14H20M7 20H20M0 2H4M0 8H4M0 14H4M0 20H4" /></svg>
      </footer>
    </div>
  );
}
